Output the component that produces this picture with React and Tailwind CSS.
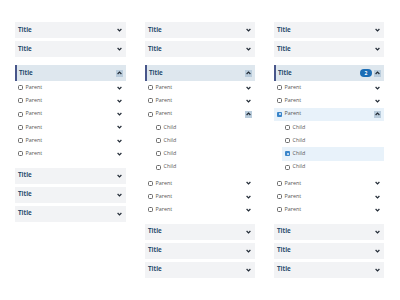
import React from 'react';

function Chevron({ up }) {
  return (
    <svg width="5" height="4" viewBox="0 0 5 4" className={up ? 'rotate-180' : ''}>
      <path d="M0.6 1 L2.5 2.9 L4.4 1" fill="none" stroke="#222b36" strokeWidth="1.2" />
    </svg>
  );
}

function Toggle({ open }) {
  return (
    <div className={`w-[7px] h-[7px] flex items-center justify-center ${open ? 'bg-[#b9ccdc]' : ''}`}>
      <Chevron up={open} />
    </div>
  );
}

function Box({ checked }) {
  if (checked) {
    return (
      <div className="w-[5px] h-[5px] rounded-[1px] bg-[#3a85c9] flex items-center justify-center">
        <div className="w-[2px] h-[2px] bg-[#e8f1fa] rounded-full" />
      </div>
    );
  }
  return <div className="w-[5px] h-[5px] rounded-[1.5px] border border-[#6a6a6a]" />;
}

function Title({ open, badge, className = '' }) {
  return (
    <div
      className={`h-4 flex items-center justify-between pr-[3px] ${
        open ? 'bg-[#dee7ee] border-l-2 border-[#48568a] pl-[2px]' : 'bg-[#f2f3f5] pl-[3px]'
      } ${className}`}
    >
      <span className="text-[6.2px] font-bold text-[#2d4e70] leading-none">Title</span>
      <div className="flex items-center gap-[2px]">
        {badge && (
          <span className="h-[8px] w-[12px] rounded-full bg-[#1b6db5] text-white text-[5px] font-bold flex items-center justify-center leading-none">
            {badge}
          </span>
        )}
        <Toggle open={open} />
      </div>
    </div>
  );
}

function Row({ label = 'Parent', child, open, checked, hasToggle = true }) {
  return (
    <div
      className={`h-[13.25px] flex items-center justify-between pl-[3px] pr-[3px] ${child ? 'ml-[8px]' : ''} ${
        checked ? 'bg-[#e8f2fa]' : ''
      }`}
    >
      <div className="flex items-center gap-[2.5px]">
        <Box checked={checked} />
        <span className="text-[5.4px] text-[#555] leading-none">{label}</span>
      </div>
      {hasToggle && <Toggle open={open} />}
    </div>
  );
}

function Column({ width, variant }) {
  const expanded = variant !== 'basic';
  const sel = variant === 'selected';
  return (
    <div className={`${width} flex flex-col pt-[22px]`}>
      <Title className="mb-[3px]" />
      <Title />
      <Title open badge={sel ? '2' : null} className="mt-[8px]" />
      {expanded ? (
        <>
          <Row />
          <Row />
          <Row open checked={sel} />
          <Row child label="Child" hasToggle={false} />
          <Row child label="Child" hasToggle={false} />
          <Row child label="Child" hasToggle={false} checked={sel} />
          <Row child label="Child" hasToggle={false} />
          <div className="mt-[3px]" />
          <Row />
          <Row />
          <Row />
        </>
      ) : (
        <>
          <Row />
          <Row />
          <Row />
          <Row />
          <Row />
          <Row />
        </>
      )}
      <Title className="mt-[7px] mb-[3px]" />
      <Title className="mb-[3px]" />
      <Title />
    </div>
  );
}

export default function App() {
  return (
    <div className="w-[400px] h-[300px] bg-white flex pl-[15px] gap-[19px] font-['Open_Sans',sans-serif]">
      <Column width="w-[111px]" variant="basic" />
      <Column width="w-[110px]" variant="open" />
      <Column width="w-[110px]" variant="selected" />
    </div>
  );
}
